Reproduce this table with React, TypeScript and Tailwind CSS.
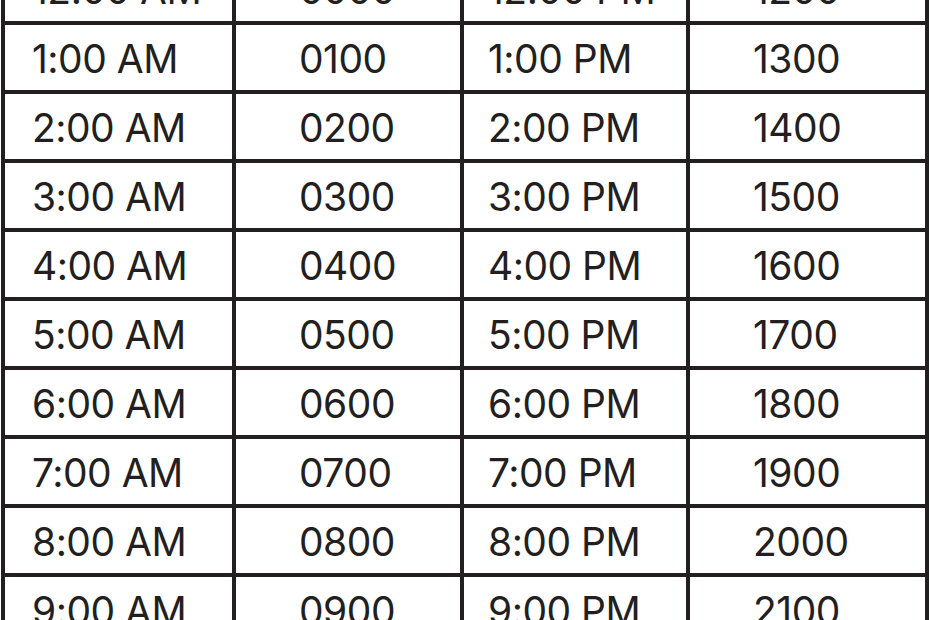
import React from "react";

const rows: [string, string, string, string][] = [
  ["12:00 AM", "0000", "12:00 PM", "1200"],
  ["1:00 AM", "0100", "1:00 PM", "1300"],
  ["2:00 AM", "0200", "2:00 PM", "1400"],
  ["3:00 AM", "0300", "3:00 PM", "1500"],
  ["4:00 AM", "0400", "4:00 PM", "1600"],
  ["5:00 AM", "0500", "5:00 PM", "1700"],
  ["6:00 AM", "0600", "6:00 PM", "1800"],
  ["7:00 AM", "0700", "7:00 PM", "1900"],
  ["8:00 AM", "0800", "8:00 PM", "2000"],
  ["9:00 AM", "0900", "9:00 PM", "2100"],
];

export default function App() {
  return (
    <div className="w-[930px] h-[620px] overflow-hidden bg-white">
      <div
        className="ml-[1px] mt-[-48px] w-[928px] grid grid-cols-[227px_224px_222px_235px] gap-[4px] p-[4px] bg-[#231f20] text-[#231f20] text-[39px] leading-none font-normal tracking-[-0.5px]"
        style={{ fontFamily: 'Inter, "Liberation Sans", sans-serif' }}
      >
        {rows.map((r, i) => (
          <React.Fragment key={i}>
            <div className="bg-white h-[65px] flex items-center pl-[27px] pt-[2px]">{r[0]}</div>
            <div className="bg-white h-[65px] flex items-center pl-[63px] pt-[2px]">{r[1]}</div>
            <div className="bg-white h-[65px] flex items-center pl-[24px] pt-[2px]">{r[2]}</div>
            <div className="bg-white h-[65px] flex items-center pl-[63px] pt-[2px]">{r[3]}</div>
          </React.Fragment>
        ))}
      </div>
    </div>
  );
}
